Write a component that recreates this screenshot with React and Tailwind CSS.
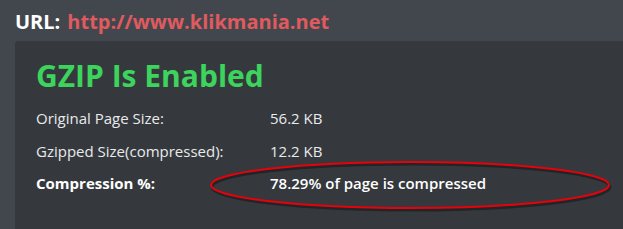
import React from 'react';

const rows = [
  { label: 'Original Page Size:', value: '56.2 KB' },
  { label: 'Gzipped Size(compressed):', value: '12.2 KB' },
];

const App = () => {
  return (
    <div
      className="w-[623px] h-[229px] overflow-hidden bg-[#42474e] pl-[15px]"
      style={{ fontFamily: '"Open Sans", "Noto Sans", sans-serif' }}
    >
      <div className="h-[41px] flex items-center pt-[3px] text-[20px] font-bold leading-none">
        <span className="text-white">URL:</span>
        <span className="ml-[7px] text-[#e05a5f]">http://www.klikmania.net</span>
      </div>
      <div className="relative h-[200px] bg-[#35393d] rounded-tl-[3px] pl-[21px] pt-[20px]">
        <h1 className="text-[30px] font-bold leading-none text-[#3cd45c]">
          GZIP Is Enabled
        </h1>
        <div className="mt-[11px] grid grid-cols-[234px_1fr] text-[15px] text-[#e8eaec]">
          {rows.map((row) => (
            <React.Fragment key={row.label}>
              <span className="h-[33px] flex items-center">{row.label}</span>
              <span className="h-[33px] flex items-center">{row.value}</span>
            </React.Fragment>
          ))}
          <span className="h-[31px] flex items-center font-bold text-white">Compression %:</span>
          <span className="h-[31px] flex items-center font-semibold text-white">
            78.29% of page is compressed
          </span>
        </div>
        <svg
          className="absolute left-[193px] top-[119px]"
          width="406"
          height="54"
          viewBox="0 0 406 54"
        >
          <ellipse cx="203" cy="27" rx="199" ry="23" fill="none" stroke="#000" strokeOpacity="0.35" strokeWidth="3" />
          <ellipse cx="202" cy="25" rx="199" ry="23" fill="none" stroke="#e8000a" strokeWidth="2" />
        </svg>
      </div>
    </div>
  );
};

export default App;
